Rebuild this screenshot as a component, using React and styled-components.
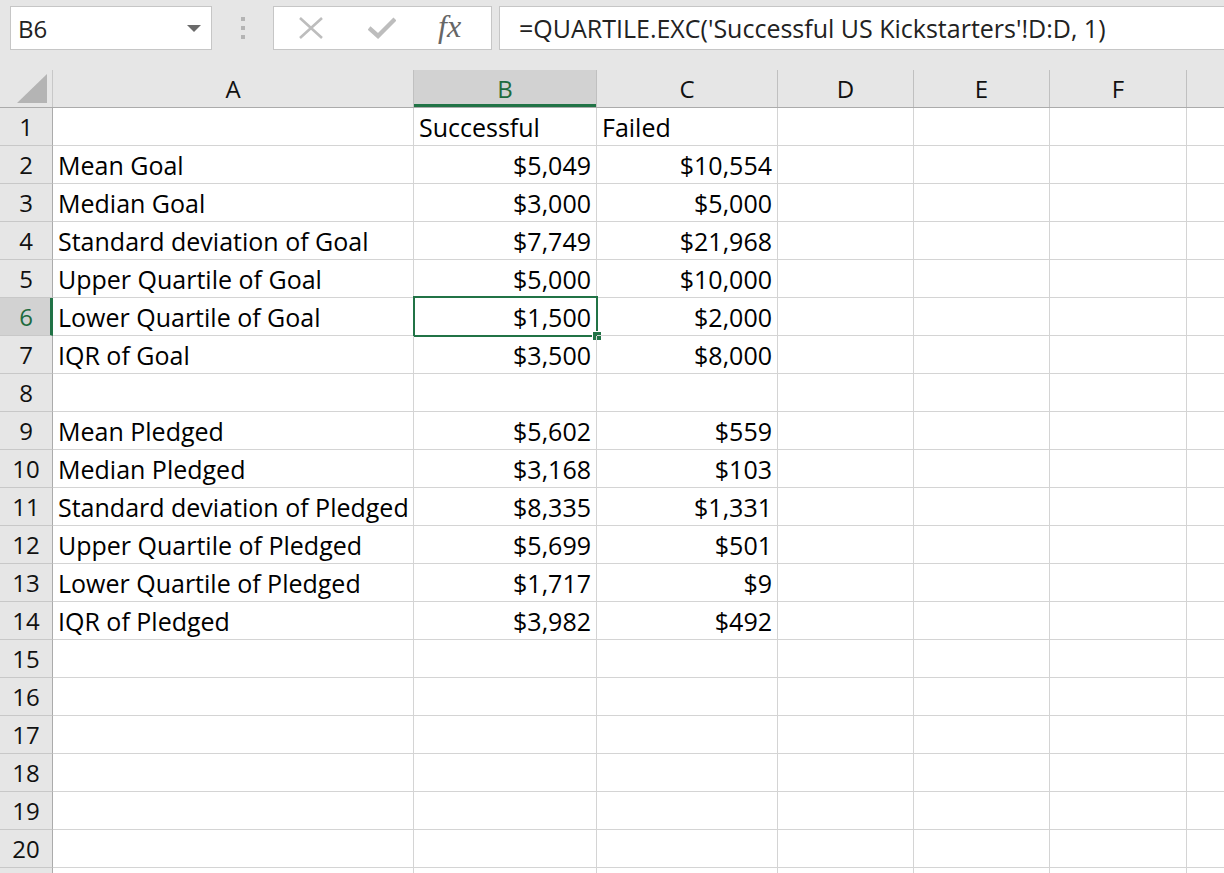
import styled, { createGlobalStyle } from 'styled-components'

const COLS = [
  { key: 'A', width: 361 },
  { key: 'B', width: 183 },
  { key: 'C', width: 181 },
  { key: 'D', width: 136 },
  { key: 'E', width: 136 },
  { key: 'F', width: 137 },
  { key: 'G', width: 120 },
]

const DATA = {
  1: ['', 'Successful', 'Failed'],
  2: ['Mean Goal', '$5,049', '$10,554'],
  3: ['Median Goal', '$3,000', '$5,000'],
  4: ['Standard deviation of Goal', '$7,749', '$21,968'],
  5: ['Upper Quartile of Goal', '$5,000', '$10,000'],
  6: ['Lower Quartile of Goal', '$1,500', '$2,000'],
  7: ['IQR of Goal', '$3,500', '$8,000'],
  9: ['Mean Pledged', '$5,602', '$559'],
  10: ['Median Pledged', '$3,168', '$103'],
  11: ['Standard deviation of Pledged', '$8,335', '$1,331'],
  12: ['Upper Quartile of Pledged', '$5,699', '$501'],
  13: ['Lower Quartile of Pledged', '$1,717', '$9'],
  14: ['IQR of Pledged', '$3,982', '$492'],
}

const SEL_ROW = 6
const SEL_COL = 'B'

const GlobalStyle = createGlobalStyle`
  html, body {
    margin: 0;
    padding: 0;
    background: #e6e6e6;
  }
  body {
    font-family: "Open Sans", "Liberation Sans", sans-serif;
  }
`

const App = () => {

  const rows = Array.from({ length: 20 }, (_, i) => i + 1)

  return (
    <Screen>
      <GlobalStyle />

      <FormulaBar>
        <NameBox>
          <NameText>B6</NameText>
          <DropArrow />
        </NameBox>

        <Grip>
          <Dot /><Dot /><Dot />
        </Grip>

        <ActionBox>
          <svg width = "26" height = "22" viewBox = "0 0 26 22">
            <path d = "M2 1 L24 21 M24 1 L2 21" stroke = "#bdbdbd" strokeWidth = "2.6" fill = "none" />
          </svg>
          <svg width = "28" height = "22" viewBox = "0 0 28 22">
            <path d = "M1 11 L10 19 L27 2" stroke = "#bdbdbd" strokeWidth = "4.4" fill = "none" />
          </svg>
          <Fx>fx</Fx>
        </ActionBox>

        <FormulaBox>
          =QUARTILE.EXC('Successful US Kickstarters'!D:D, 1)
        </FormulaBox>
      </FormulaBar>

      <Sheet>
        <HeaderRow>
          <Corner>
            <svg width = "32" height = "30" viewBox = "0 0 32 30">
              <polygon points = "31,0 31,29 1,29" fill = "#b4b4b4" />
            </svg>
          </Corner>
          {COLS.map(c => (
            <ColHeader key = { c.key } $w = { c.width } $selected = { c.key === SEL_COL }>
              {c.key === 'G' ? '' : c.key}
            </ColHeader>
          ))}
        </HeaderRow>

        {rows.map(r => {
          const vals = DATA[r] || []
          return (
            <Row key = { r }>
              <RowHeader $selected = { r === SEL_ROW }>{r}</RowHeader>
              {COLS.map((c, i) => {
                const v = vals[i] || ''
                const isNum = v.startsWith('$')
                return (
                  <Cell key = { c.key } $w = { c.width } $num = { isNum }>
                    {v}
                    {r === SEL_ROW && c.key === SEL_COL && (
                      <Selection>
                        <Handle />
                      </Selection>
                    )}
                  </Cell>
                )
              })}
            </Row>
          )
        })}

        {/* next row, only its top sliver is in view */}
        <Row>
          <RowHeader />
          {COLS.map(c => <Cell key = { c.key } $w = { c.width } />)}
        </Row>
      </Sheet>
    </Screen>
  )

}


const Screen = styled.div`
  width: 100vw;
  height: 100vh;
  overflow: hidden;
  background: #e6e6e6;
`

const FormulaBar = styled.div`
  display: flex;
  align-items: flex-start;
  height: 70px;
  padding: 6px 0 0 10px;
  box-sizing: border-box;
`

const NameBox = styled.div`
  width: 202px;
  height: 44px;
  box-sizing: border-box;
  background: #fff;
  border: 1px solid #c6c6c6;
  display: flex;
  align-items: center;
  justify-content: space-between;
  padding: 0 10px 0 7px;
`

const NameText = styled.span`
  font-size: 24px;
  color: #222;
`

const DropArrow = styled.span`
  width: 0;
  height: 0;
  border-left: 7px solid transparent;
  border-right: 7px solid transparent;
  border-top: 7px solid #6a6a6a;
`

const Grip = styled.div`
  width: 61px;
  height: 44px;
  display: flex;
  flex-direction: column;
  align-items: center;
  justify-content: center;
  gap: 5px;
`

const Dot = styled.span`
  width: 4px;
  height: 4px;
  background: #b4b4b4;
`

const ActionBox = styled.div`
  width: 219px;
  height: 44px;
  box-sizing: border-box;
  background: #fff;
  border: 1px solid #c6c6c6;
  display: flex;
  align-items: center;
  padding-left: 24px;
  gap: 44px;
`

const Fx = styled.span`
  font-family: "Liberation Serif", serif;
  font-style: italic;
  font-size: 32px;
  color: #666;
  margin-left: -2px;
  margin-top: -4px;
`

const FormulaBox = styled.div`
  flex: 1;
  height: 44px;
  margin-left: 7px;
  box-sizing: border-box;
  background: #fff;
  border: 1px solid #c6c6c6;
  border-right: none;
  display: flex;
  align-items: center;
  padding-left: 19px;
  font-size: 25px;
  color: #222;
  white-space: nowrap;
`

const Sheet = styled.div`
  display: flex;
  flex-direction: column;
  background: #fff;
`

const HeaderRow = styled.div`
  display: flex;
  height: 38px;
  background: #e6e6e6;
  border-bottom: 1px solid #ababab;
  box-sizing: border-box;
`

const Corner = styled.div`
  width: 53px;
  flex: none;
  box-sizing: border-box;
  border-right: 1px solid #c8c8c8;
  display: flex;
  align-items: flex-end;
  justify-content: flex-end;
  padding: 0 4px 3px 0;
`

const ColHeader = styled.div`
  width: ${p => p.$w}px;
  flex: none;
  box-sizing: border-box;
  border-right: 1px solid #c0c0c0;
  display: flex;
  align-items: center;
  justify-content: center;
  font-size: 24px;
  color: ${p => p.$selected ? '#1e6b3e' : '#111'};
  background: ${p => p.$selected ? '#d2d2d2' : 'transparent'};
  box-shadow: ${p => p.$selected ? 'inset 0 -3px 0 #217346' : 'none'};
`

const Row = styled.div`
  display: flex;
  height: 38px;
  flex: none;
`

const RowHeader = styled.div`
  width: 53px;
  flex: none;
  box-sizing: border-box;
  background: ${p => p.$selected ? '#d2d2d2' : '#e6e6e6'};
  border-right: ${p => p.$selected ? '3px solid #217346' : '1px solid #ababab'};
  border-bottom: 1px solid #c8c8c8;
  display: flex;
  align-items: center;
  justify-content: center;
  padding-left: ${p => p.$selected ? '2px' : '0'};
  font-size: 24px;
  color: ${p => p.$selected ? '#1e6b3e' : '#111'};
`

const Cell = styled.div`
  position: relative;
  width: ${p => p.$w}px;
  flex: none;
  box-sizing: border-box;
  border-right: 1px solid #d4d4d4;
  border-bottom: 1px solid #d4d4d4;
  display: flex;
  align-items: flex-end;
  justify-content: ${p => p.$num ? 'flex-end' : 'flex-start'};
  padding: 0 5px 0 5px;
  font-size: 25px;
  line-height: 36px;
  color: #000;
  white-space: nowrap;
`

const Selection = styled.div`
  position: absolute;
  top: -2px;
  left: -1px;
  right: -2px;
  bottom: -2px;
  border: 2px solid #217346;
  pointer-events: none;
`

const Handle = styled.div`
  position: absolute;
  right: -6px;
  bottom: -6px;
  width: 8px;
  height: 8px;
  background: #217346;
  border: 1px solid #fff;
`

export default App
